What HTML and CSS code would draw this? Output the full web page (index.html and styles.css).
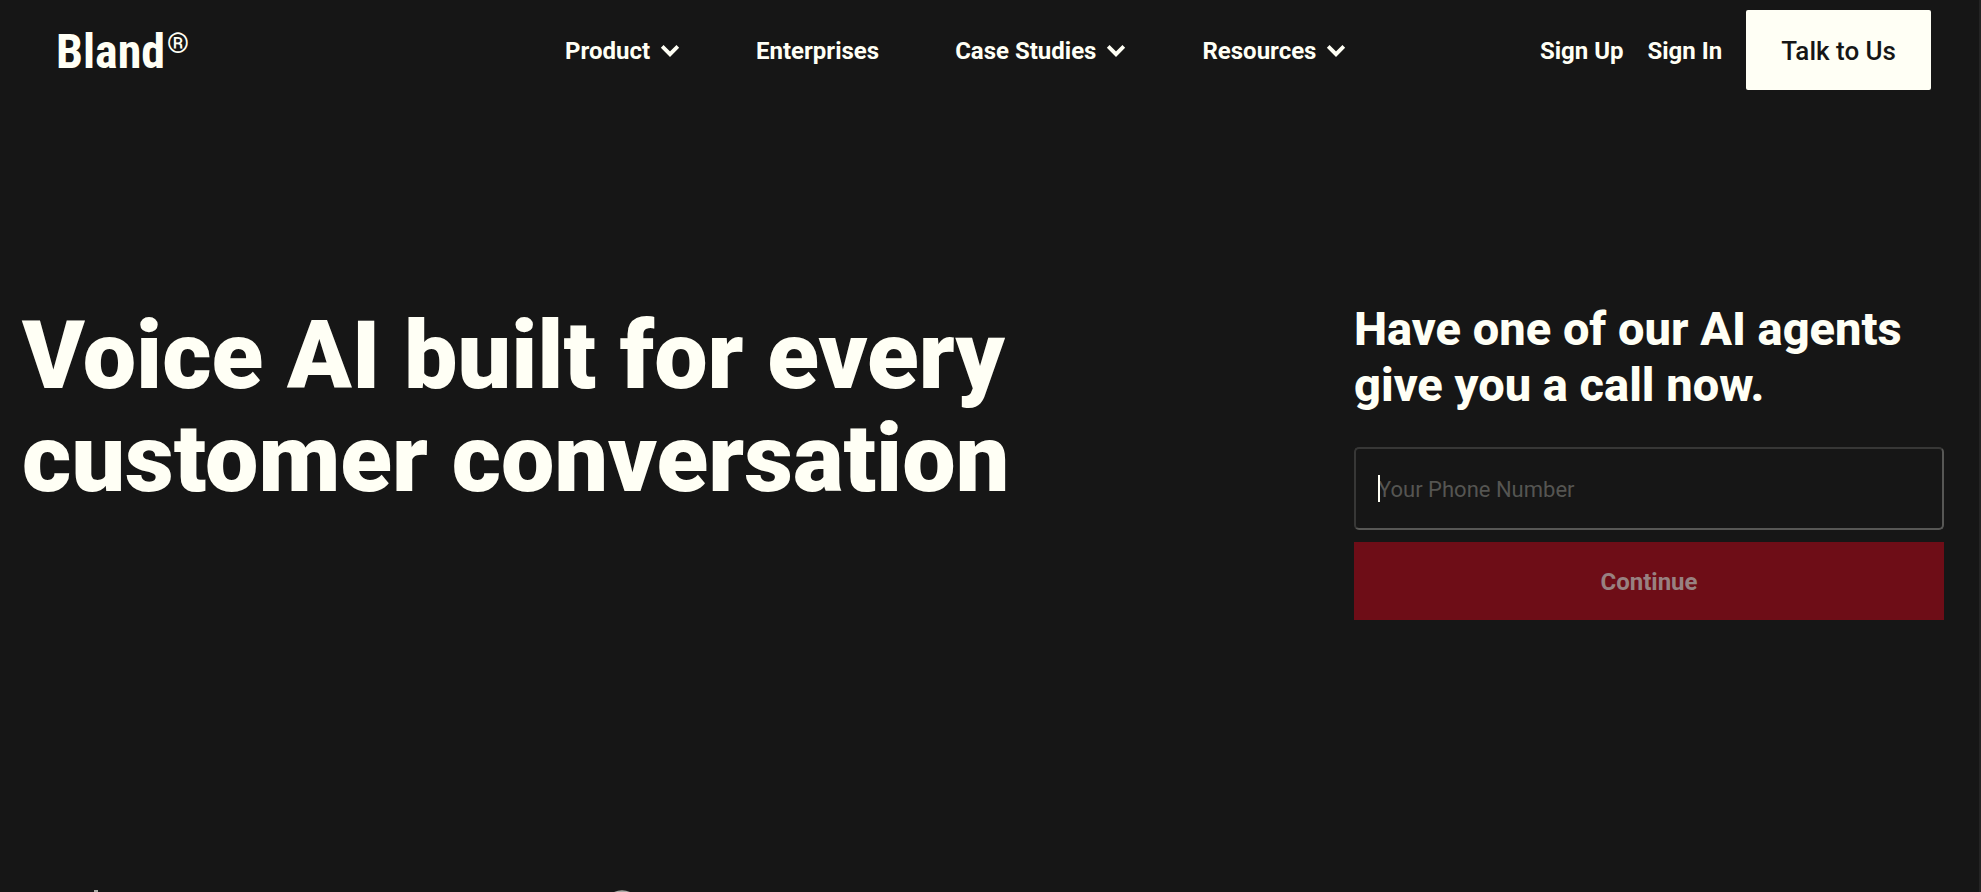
FILE: index.html
```html
<!DOCTYPE html>
<html lang="en">
<head>
<meta charset="utf-8">
<meta name="viewport" content="width=device-width, initial-scale=1">
<title>Bland</title>
<link rel="stylesheet" href="styles.css">
</head>
<body>
<header class="header">
  <a class="logo" href="#">Bland<span class="logo-mark">®</span></a>
  <nav class="nav" aria-label="Main">
    <button class="nav-item" type="button">Product
      <svg class="chevron" viewBox="0 0 20 14"><path d="M2.2 2.4 10 10.2 17.8 2.4"/></svg></button>
    <a class="nav-item" href="#">Enterprises</a>
    <button class="nav-item" type="button">Case Studies
      <svg class="chevron" viewBox="0 0 20 14"><path d="M2.2 2.4 10 10.2 17.8 2.4"/></svg></button>
    <button class="nav-item" type="button">Resources
      <svg class="chevron" viewBox="0 0 20 14"><path d="M2.2 2.4 10 10.2 17.8 2.4"/></svg></button>
  </nav>
  <div class="actions">
    <a class="nav-item" href="#">Sign Up</a>
    <a class="nav-item" href="#">Sign In</a>
    <a class="talk" href="#">Talk to Us</a>
  </div>
</header>
<main class="hero">
  <h1 class="title">Voice AI built for every<br>customer conversation</h1>
  <form class="call">
    <h2 class="call-title">Have one of our AI agents<br>give you a call now.</h2>
    <div class="field">
      <input class="phone" type="tel" placeholder="Your Phone Number" aria-label="Your Phone Number">
      <span class="caret"></span>
    </div>
    <button class="continue" type="submit" disabled>Continue</button>
  </form>
</main>
<footer class="customers">
  <svg class="customer" viewBox="0 0 40 2"><path d="M14 2V0h4v2z"/></svg>
  <svg class="customer" viewBox="0 0 40 2"><path d="M12 2Q20-1.6 28 2z"/></svg>
</footer>
</body>
</html>
```
FILE: styles.css
```css
* {
  box-sizing: border-box;
}

body {
  display: flex;
  flex-direction: column;
  min-height: 100vh;
  margin: 0;
  border-right: 2px solid #242424;
  background: #161616;
  color: #fffff5;
  font-family: Roboto, "Liberation Sans", sans-serif;
}

a {
  color: inherit;
  text-decoration: none;
}

.header {
  display: grid;
  grid-template-columns: 509px 1fr auto;
  align-items: center;
  padding: 10px 48px 10px 56px;
}

.logo {
  display: flex;
  align-items: flex-start;
  gap: 2px;
  padding-top: 4px;
  font-family: "Roboto Condensed", Roboto, sans-serif;
  font-size: 48px;
  font-weight: 700;
  line-height: 56px;
}

.logo-mark {
  font-size: 28px;
  font-weight: 500;
  line-height: 40px;
}

.nav {
  display: flex;
  gap: 76px;
}

.nav-item {
  display: flex;
  align-items: center;
  gap: 10px;
  padding: 2px 0 0;
  border: 0;
  background: none;
  color: inherit;
  font: 700 24px/28px Roboto, "Liberation Sans", sans-serif;
  white-space: nowrap;
}

.chevron {
  width: 20px;
  height: 14px;
  fill: none;
  stroke: currentColor;
  stroke-width: 3.8;
}

.actions {
  display: flex;
  align-items: center;
  gap: 24px;
}

.talk {
  padding: 25px 35px 23px;
  border-radius: 2px;
  background: #fffff5;
  color: #161616;
  font-size: 26px;
  font-weight: 500;
  line-height: 32px;
}

.hero {
  display: flex;
  flex: 1;
  justify-content: space-between;
  align-items: flex-start;
  padding: 201px 35px 0 22px;
}

.title {
  margin: 3px 0 0;
  font-size: 95px;
  font-weight: 900;
  line-height: 103px;
}

.call {
  display: flex;
  flex: 0 0 590px;
  flex-direction: column;
  gap: 12px;
}

.call-title {
  margin: 0 0 22px;
  font-size: 47px;
  font-weight: 800;
  line-height: 56px;
}

.field {
  position: relative;
  display: flex;
}

.phone {
  width: 100%;
  height: 83px;
  padding: 2px 22px 0;
  border: 2px solid;
  border-color: #373736 #575755 #575755 #373736;
  border-radius: 5px;
  outline: 0;
  background: transparent;
  color: inherit;
  font: 400 22px Roboto, "Liberation Sans", sans-serif;
}

.phone::placeholder {
  color: #555552;
}

.caret {
  position: absolute;
  top: 28px;
  left: 24px;
  width: 2px;
  height: 27px;
  background: #fffff5;
}

.continue {
  height: 78px;
  padding: 2px 0 0;
  border: 0;
  background: #6e0d17;
  color: #988181;
  font: 700 24px Roboto, "Liberation Sans", sans-serif;
}

.customers {
  display: flex;
  gap: 482px;
  padding-left: 80px;
}

.customer {
  width: 40px;
  height: 2px;
  fill: #aaaaa5;
}
```
